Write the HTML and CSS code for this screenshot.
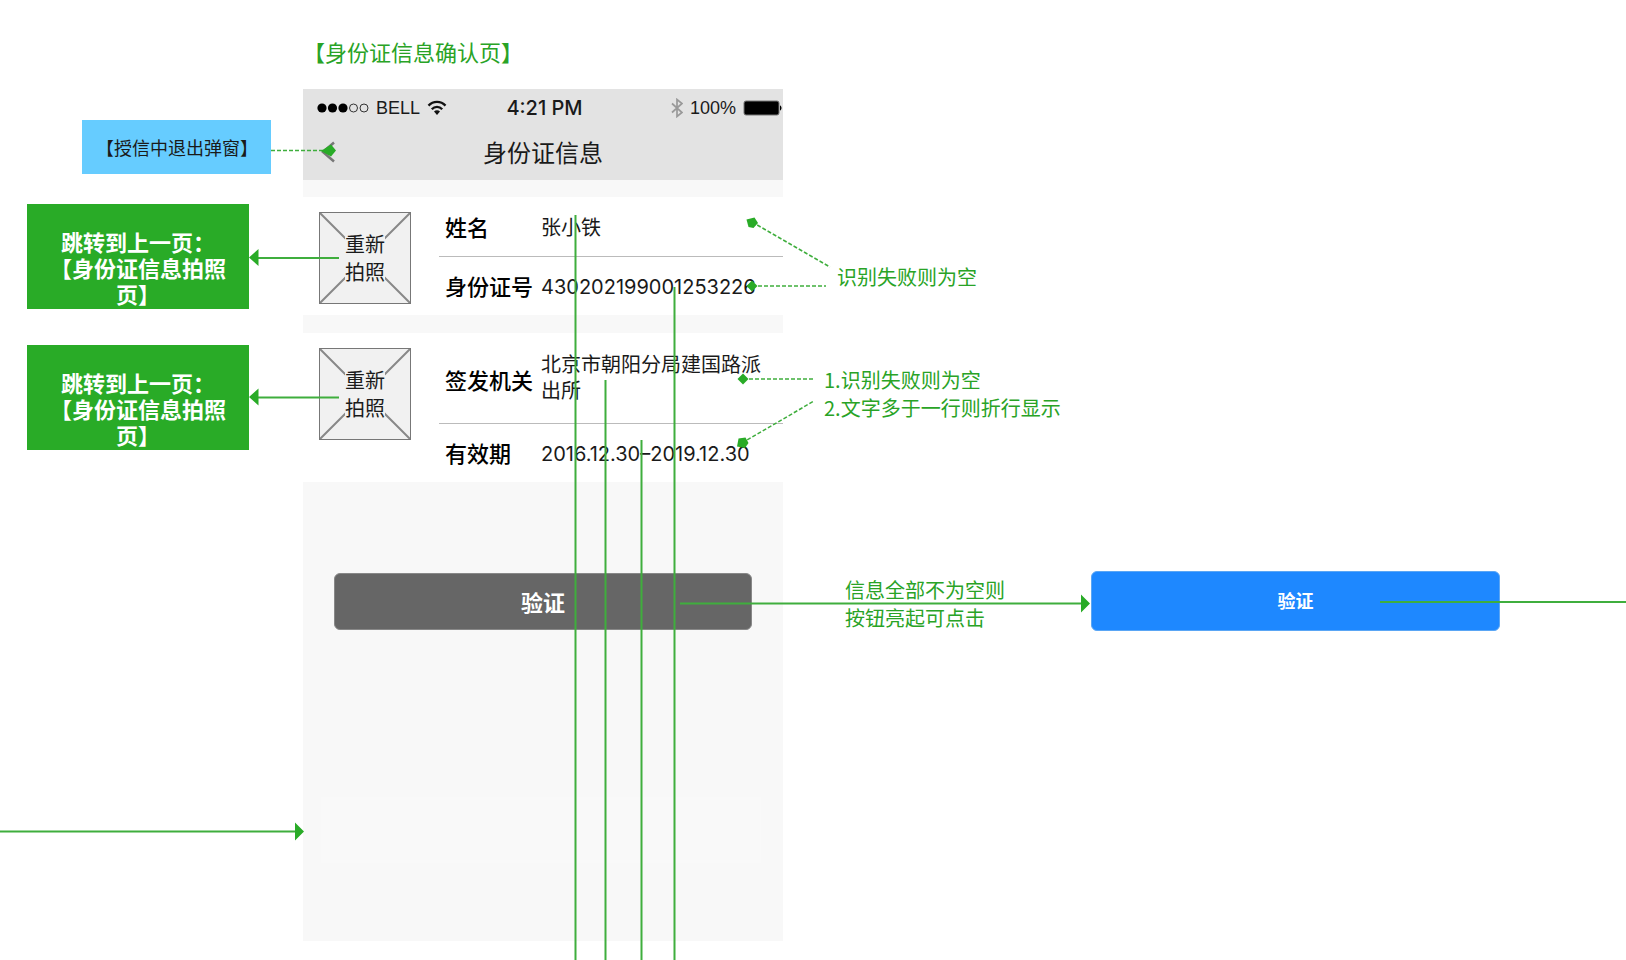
FILE: index.html
```
<!DOCTYPE html>
<html lang="zh-CN">
<head>
<meta charset="utf-8">
<title>身份证信息确认页</title>
<meta name="viewport" content="width=device-width, initial-scale=1">
<link rel="stylesheet" href="styles.css">
</head>
<body>
<main class="canvas">
  <h1 class="node flow-title">【身份证信息确认页】</h1>

  <a class="node link-dialog" href="#exit">【授信中退出弹窗】</a>
  <a class="node link-page link-front" href="#photo">跳转到上一页：<br>【身份证信息拍照<br>页】</a>
  <a class="node link-page link-back" href="#photo">跳转到上一页：<br>【身份证信息拍照<br>页】</a>

  <section class="node phone">
    <header class="phone-head">
      <div class="status">
        <div class="status-side status-start">
          <svg class="signal" width="52" height="12" viewBox="0 0 52 12" aria-hidden="true">
            <g fill="#000"><circle cx="5" cy="6" r="4.600"/><circle cx="15.500" cy="6" r="4.600"/><circle cx="26" cy="6" r="4.600"/></g>
            <g fill="none" stroke="#333" stroke-width="1"><circle cx="36.500" cy="6" r="4"/><circle cx="47" cy="6" r="4"/></g>
          </svg>
          <span>BELL</span>
          <svg width="20" height="16" viewBox="0 0 20 16" aria-hidden="true">
            <g fill="none" stroke="#111" stroke-width="2.300"><path d="M1.500 5.600C6.200.6 13.800.6 18.500 5.600"/><path d="M4.800 9.200c2.900-3.100 7.500-3.100 10.400 0"/></g>
            <path fill="#111" d="M7 11.600c1.700-1.700 4.300-1.700 6 0L10 15z"/>
          </svg>
        </div>
        <span class="status-time">4:21 PM</span>
        <div class="status-side status-end">
          <svg width="12" height="20" viewBox="0 0 12 20" aria-hidden="true"><path fill="none" stroke="#999" stroke-width="1.700" d="M1 5.500 11 14.500 6 18.500V1.500l5 4L1 14.500"/></svg>
          <span>100%</span>
          <svg width="39" height="16" viewBox="0 0 39 16" aria-hidden="true"><rect x="1" y="1" width="35" height="14" rx="2" fill="#000" stroke="#777"/><path d="M37 5.500c2 .5 2 4.500 0 5z" fill="#000"/></svg>
        </div>
      </div>
      <div class="nav">
        <button class="back" type="button" aria-label="返回"><svg width="14" height="22" viewBox="0 0 14 22" aria-hidden="true"><path d="M13 1.500 2 11l11 9.500" fill="none" stroke="#777" stroke-width="2.500"/></svg></button>
        <h2 class="nav-title">身份证信息</h2>
      </div>
    </header>

    <div class="card">
      <button class="thumb" type="button">
        <svg class="thumb-cross" viewBox="0 0 90 90" aria-hidden="true"><path d="M0 0 90 90M90 0 0 90" stroke="#888" stroke-width="2"/></svg>
        <span class="thumb-text">重新<br>拍照</span>
      </button>
      <dl class="fields">
        <div class="row"><dt>姓名</dt><dd>张小铁</dd></div>
        <div class="row"><dt>身份证号</dt><dd class="digits">430202199001253226</dd></div>
      </dl>
    </div>

    <div class="card">
      <button class="thumb" type="button">
        <svg class="thumb-cross" viewBox="0 0 90 90" aria-hidden="true"><path d="M0 0 90 90M90 0 0 90" stroke="#888" stroke-width="2"/></svg>
        <span class="thumb-text">重新<br>拍照</span>
      </button>
      <dl class="fields">
        <div class="row row-tall"><dt>签发机关</dt><dd>北京市朝阳分局建国路派出所</dd></div>
        <div class="row"><dt>有效期</dt><dd class="digits">2016.12.30–2019.12.30</dd></div>
      </dl>
    </div>

    <button class="verify verify-off" type="button">验证</button>
    <div class="placeholder"></div>
  </section>

  <p class="node note note-empty">识别失败则为空</p>
  <p class="node note note-wrap">1.识别失败则为空<br>2.文字多于一行则折行显示</p>
  <p class="node note note-active">信息全部不为空则<br>按钮亮起可点击</p>
  <button class="node verify verify-on" type="button">验证</button>

  <svg class="wires" aria-hidden="true">
    <g class="wire">
      <line x1="575.500" y1="215" x2="575.500" y2="100%"/>
      <line x1="605.500" y1="380" x2="605.500" y2="100%"/>
      <line x1="641.500" y1="440" x2="641.500" y2="100%"/>
      <line x1="674.500" y1="287" x2="674.500" y2="100%"/>
      <line x1="339" y1="258" x2="256" y2="258"/>
      <line x1="339" y1="397.500" x2="256" y2="397.500"/>
      <line x1="0" y1="831.500" x2="296" y2="831.500"/>
      <line x1="680" y1="603.500" x2="1082" y2="603.500"/>
      <line x1="1380" y1="602" x2="100%" y2="602"/>
    </g>
    <g class="wire wire-dashed">
      <line x1="271" y1="150.500" x2="325" y2="150.500"/>
      <line x1="752" y1="222" x2="830" y2="267"/>
      <line x1="752" y1="286" x2="826" y2="286"/>
      <line x1="743" y1="379" x2="814" y2="379"/>
      <line x1="742" y1="443" x2="814" y2="401"/>
    </g>
    <g class="tip">
      <path d="M249 257.500 258.500 249v17zM249 397 258.500 388.500v17z"/>
      <path d="M304 831.500 295 822.500v18zM1090 603.500 1081 594.500v18z"/>
      <path d="M321 151 331 144.500 336 150.500 331 156.500z"/>
      <path d="M746.500 219.500 754.500 217.500 758 223 753.500 228 748.500 227z"/>
      <path d="M752 280.500 757.500 286 752 291.500 746.500 286z"/>
      <path d="M743 373.500 748.500 379 743 384.500 737.500 379z"/>
      <path d="M738.500 438.500 745.500 437.500 748.500 443 745 448 737 446.500z"/>
    </g>
  </svg>
</main>
</body>
</html>
```
FILE: styles.css
```
* { box-sizing: border-box; }

body {
  margin: 0;
  background: #fff;
  color: #1a1a1a;
  font-family: "Noto Sans CJK SC", "Liberation Sans", sans-serif;
  font-size: 20px;
}

h1, h2, p, dl, dd { margin: 0; }
a { color: inherit; text-decoration: none; }
button { font: inherit; color: inherit; border: 0; padding: 0; cursor: pointer; }

/* Flow canvas: nodes are pinned, wires lie over them */
.canvas {
  position: relative;
  min-height: 100vh;
  overflow: hidden;
}
.node { position: absolute; }
.wires {
  position: absolute;
  inset: 0;
  width: 100%;
  height: 100%;
  pointer-events: none;
}
.wire { stroke: #3fae3d; stroke-width: 2; }
.wire-dashed { stroke-width: 1.5; stroke-dasharray: 4 2; }
.tip { fill: #29ab27; }

.flow-title {
  left: 303px;
  top: 34px;
  font-size: 22px;
  line-height: 34px;
  font-weight: 400;
  color: #29a326;
}

.link-dialog {
  left: 82px;
  top: 120px;
  padding: 14px 13px 14px 14px;
  background: #6cf;
  font-size: 18px;
  line-height: 26px;
}
.link-page {
  left: 27px;
  padding: 24px 23px 3px;
  background: #29ab27;
  color: #fff;
  font-size: 22px;
  font-weight: 700;
  line-height: 26px;
  text-align: center;
}
.link-front { top: 204px; }
.link-back { top: 345px; }

.phone {
  left: 303px;
  top: 89px;
  width: 480px;
  padding-bottom: 78px;
  background: #f8f8f8;
}
.phone-head { background: #e3e3e3; margin-bottom: 17px; }

.status {
  display: grid;
  grid-template-columns: 1fr auto 1fr;
  align-items: center;
  height: 38px;
  padding: 0 1px 0 4px;
  font-family: "Liberation Sans", sans-serif;
  font-size: 18px;
}
.status-side { display: flex; align-items: center; gap: 7px; }
.status-start { padding-left: 10px; }
.status-end { justify-content: flex-end; }
.status-time { font-size: 20px; font-family: Inter, sans-serif; font-weight: 500; }

.nav {
  display: grid;
  grid-template-columns: 48px 1fr 48px;
  align-items: center;
  height: 53px;
  padding-bottom: 4px;
}
.back {
  display: flex;
  padding-left: 18px;
  background: none;
}
.nav-title {
  font-size: 24px;
  line-height: 36px;
  font-weight: 400;
  text-align: center;
}

.card {
  display: flex;
  align-items: flex-start;
  gap: 28px;
  margin-bottom: 18px;
  padding-left: 16px;
  background: #fff;
}
.thumb {
  position: relative;
  display: grid;
  place-items: center;
  width: 92px;
  height: 92px;
  margin-top: 15px;
  border: 1px solid #777;
  background: #f1f1f1;
}
.thumb-cross { position: absolute; inset: 0; }
.thumb-text {
  position: relative;
  background: #f1f1f1;
  line-height: 28px;
}

.fields { flex: 1; }
.row {
  display: grid;
  grid-template-columns: 96px 1fr;
  align-items: center;
  min-height: 59px;
  padding-left: 6px;
  line-height: 26px;
}
.row + .row { border-top: 1px solid #bbb; }
.row-tall { min-height: 90px; }
.row dt {
  padding-bottom: 2px;
  font-size: 22px;
  font-weight: 500;
  color: #000;
}
.row-tall dt { padding: 2px 0 0; }
.row dd { padding-right: 18px; }
.row-tall dd { padding-bottom: 2px; }
.row .digits {
  padding: 2px 0 0;
  font-family: Inter, sans-serif;
}

.verify {
  padding-bottom: 2px;
  border-radius: 6px;
  color: #fff;
  font-weight: 700;
}
.verify-off {
  display: block;
  width: 418px;
  height: 57px;
  margin: 91px auto 0;
  background: #666;
  border: 1px solid #888;
  font-size: 22px;
}
.verify-on {
  left: 1091px;
  top: 571px;
  width: 409px;
  height: 60px;
  background: #1e88ff;
  border: 1px solid #5aa6f5;
  font-size: 18px;
}
.placeholder {
  height: 66px;
  margin: 167px 22px 0 18px;
  background: #f9f9f9;
}

.note {
  color: #29a326;
  line-height: 28px;
  white-space: nowrap;
}
.note-empty { left: 837px; top: 263px; }
.note-wrap { left: 824px; top: 366px; }
.note-active { left: 845px; top: 576px; }
```
